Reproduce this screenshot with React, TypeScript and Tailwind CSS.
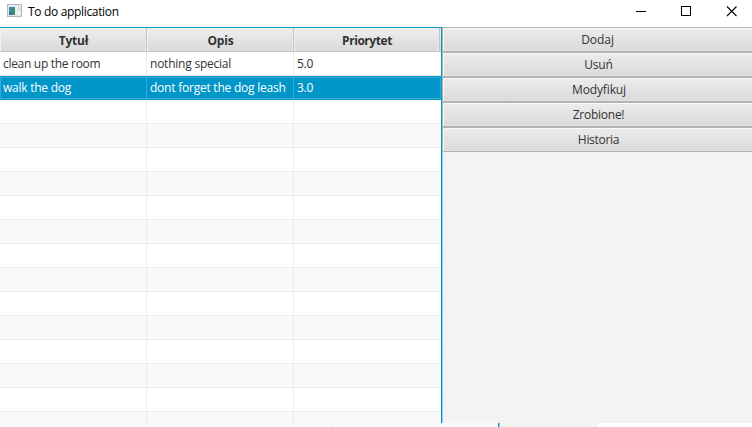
type Task = { title: string; note: string; priority: string; selected?: boolean };

const tasks: Task[] = [
  { title: 'clean up the room', note: 'nothing special', priority: '5.0' },
  { title: 'walk the dog', note: 'dont forget the dog leash', priority: '3.0', selected: true },
];

const emptyRows = Array.from({ length: 14 }, (_, i) => i);

const actions = [
  { label: 'Dodaj', spacing: 'tracking-[-0.05px]' },
  { label: 'Usuń', spacing: 'tracking-[-0.2px] pl-[2px]' },
  { label: 'Modyfikuj', spacing: 'tracking-[-0.15px] pl-[3px]' },
  { label: 'Zrobione!', spacing: 'tracking-[-0.25px] pl-[2px]' },
  { label: 'Historia', spacing: 'tracking-[-0.3px] pl-[2px]' },
];

const headers = [
  { label: 'Tytuł', spacing: 'w-[147px] tracking-[-0.2px] pl-px' },
  { label: 'Opis', spacing: 'w-[147px] tracking-[-0.2px] pl-px' },
  { label: 'Priorytet', spacing: 'w-[146px] tracking-[-0.45px] pl-px' },
];

function TitleBar() {
  return (
    <header className="flex h-[27px] shrink-0 items-start bg-white">
      <svg className="ml-[7px] mt-1 h-[13px] w-[15px]" viewBox="0 0 15 13" shapeRendering="crispEdges">
        <rect width="15" height="13" fill="#b5b7ba" />
        <rect x="1" y="1" width="13" height="11" fill="#e6e7ea" />
        <rect x="2" y="3" width="6" height="8" fill="#4287ad" />
        <rect x="5" y="4" width="3" height="7" fill="#3f8d78" />
        <rect x="2" y="8" width="3" height="3" fill="#3277a4" />
        <rect x="8" y="3" width="3" height="8" fill="#eeeef0" />
        <rect x="11" y="3" width="2" height="4" fill="#d0e6d4" />
        <rect x="11" y="7" width="2" height="4" fill="#f6f6f6" />
      </svg>
      <span className="ml-[6px] mt-[3px] text-[12px] leading-[18px] tracking-[-0.33px] text-black">To do application</span>
      <svg className="ml-auto mr-[15px] mt-[6px] h-[11px] w-[101px]" viewBox="0 0 101 11" fill="none" stroke="#000">
        <path d="M0 5.5h10M45.5 .5h9v9h-9z" shapeRendering="crispEdges" />
        <path d="M91 .5l9.5 9.5M100.5 .5L91 10" strokeWidth="1.1" />
      </svg>
    </header>
  );
}

function HeaderRow() {
  return (
    <div className="flex h-6 shrink-0 border-b border-[#c8c8c8] bg-linear-to-b from-[#efefef] to-[#d9d9d9] text-[12px] font-bold leading-[26px] text-[#333]">
      {headers.map((h) => (
        <div
          key={h.label}
          className={`border-r border-[#c3c3c3] text-center shadow-[inset_1px_1px_0_#f3f3f3,inset_-1px_0_0_#e9e9e9] ${h.spacing}`}
        >
          {h.label}
        </div>
      ))}
    </div>
  );
}

function Row({ task, odd }: { task?: Task; odd?: boolean }) {
  const selected = task?.selected;
  const cell = `h-full shrink-0 border-r ${selected ? 'border-[#33abd4]' : 'border-[#ececec]'}`;
  const color = selected
    ? 'border-y border-[#0096c9] bg-[#0096c9] leading-[22px] text-white shadow-[inset_0_0_0_1px_#33abd4]'
    : odd
      ? 'border-b border-[#ececec] bg-[#f9f9f9] leading-6 text-[#333]'
      : 'border-b border-[#ececec] bg-white leading-6 text-[#333]';
  return (
    <div className={`flex h-6 shrink-0 overflow-hidden whitespace-nowrap text-[12px] ${color}`}>
      <div className={`${cell} w-[147px] pl-[3px] ${selected ? 'tracking-[-0.25px]' : 'tracking-[-0.3px]'}`}>{task?.title}</div>
      <div className={`${cell} w-[147px] pl-[3px] tracking-[-0.23px]`}>{task?.note}</div>
      <div className="pl-[3px] tracking-[-0.3px]">{task?.priority}</div>
    </div>
  );
}

function ActionButton({ label, spacing }: { label: string; spacing: string }) {
  return (
    <button
      className={`h-[25px] w-full rounded-l-[2px] border border-r-0 border-[#b3b3b3] bg-linear-to-b from-[#ececec] to-[#dadada] text-center text-[12px] leading-[23px] text-[#333] shadow-[inset_1px_1px_0_#fbfbfb,inset_0_-1px_0_#e2e2e2] ${spacing}`}
    >
      {label}
    </button>
  );
}

export default function App() {
  return (
    <div className="flex h-[427px] w-[752px] flex-col overflow-hidden bg-[#f3f3f3] font-['Open_Sans','Noto_Sans',sans-serif]">
      <TitleBar />
      <main className="flex h-[396px] shrink-0">
        <section className="flex w-[442px] flex-col overflow-hidden border-r border-t border-[#0096c9] bg-white">
          <HeaderRow />
          {tasks.map((t) => (
            <Row key={t.title} task={t} />
          ))}
          {emptyRows.map((i) => (
            <Row key={i} odd={i % 2 === 1} />
          ))}
        </section>
        <aside className="flex flex-1 flex-col border-l border-[#93d0e5] bg-[#f3f3f3]">
          <div className="-ml-px flex flex-col">
            {actions.map((a) => (
              <ActionButton key={a.label} {...a} />
            ))}
          </div>
        </aside>
      </main>
      <footer className="flex h-1 shrink-0 bg-white">
        <div className="w-[166px] border-r border-[#ececec] bg-[#f9f9f9]" />
        <div className="w-[166px] border-r border-[#ececec] bg-[#f9f9f9]" />
        <div className="w-[167px] border-r border-[#0096c9] bg-[#f9f9f9]" />
        <div className="w-[99px] border-l border-[#93d0e5] bg-[#f3f3f3]" />
      </footer>
    </div>
  );
}
